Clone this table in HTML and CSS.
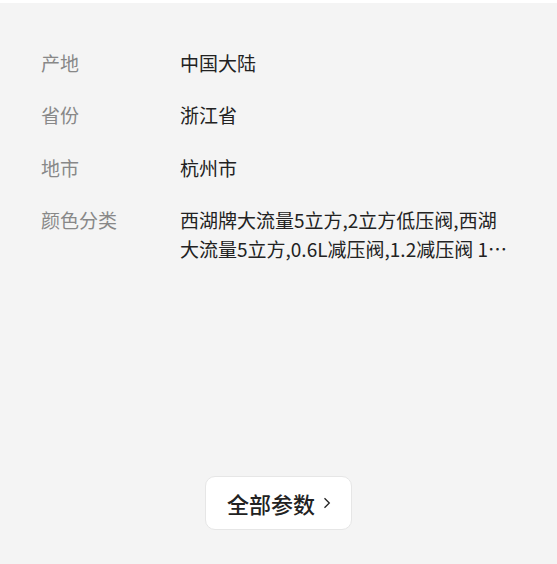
FILE: index.html
```html
<!DOCTYPE html>
<html lang="zh">
<head>
<meta charset="utf-8">
<link rel="stylesheet" href="styles.css">
</head>
<body>
<div class="page">
  <div class="params">
    <div class="row"><div class="label">产地</div><div class="value">中国大陆</div></div>
    <div class="row"><div class="label">省份</div><div class="value">浙江省</div></div>
    <div class="row"><div class="label">地市</div><div class="value">杭州市</div></div>
    <div class="row"><div class="label">颜色分类</div><div class="value clamp">西湖牌大流量5立方,2立方低压阀,西湖大流量5立方,0.6L减压阀,1.2减压阀 1立方低压阀,西湖牌家用减压阀</div></div>
  </div>
  <div class="btn-wrap">
    <button class="all-btn">全部参数<svg class="chev" width="8" height="12" viewBox="0 0 8 12"><path d="M1.5 1.2l4.8 4.8-4.8 4.8" fill="none" stroke="#222" stroke-width="1.3"/></svg></button>
  </div>
</div>
</body>
</html>
```
FILE: styles.css
```css
html, body {
  margin: 0;
  padding: 0;
  background: #f4f4f4;
}
body {
  font-family: "Noto Sans CJK SC", "Noto Sans", sans-serif;
}
.page {
  border-top: 3px solid #ffffff;
  height: 561px;
  box-sizing: border-box;
  background: #f4f4f4;
}
.params {
  padding: 45px 0 0 41px;
  display: flex;
  flex-direction: column;
  gap: 23.3px;
}
.row {
  display: flex;
  font-size: 19px;
  line-height: 29px;
}
.label {
  width: 139px;
  flex: none;
  color: #888;
}
.value {
  width: 335px;
  color: #222;
}
.clamp {
  display: -webkit-box;
  -webkit-line-clamp: 2;
  -webkit-box-orient: vertical;
  overflow: hidden;
}
.btn-wrap {
  display: flex;
  justify-content: center;
  margin-top: 213px;
}
.all-btn {
  width: 147px;
  height: 54px;
  background: #fff;
  border: 1px solid #e6e6e6;
  border-radius: 10px;
  font-family: inherit;
  font-size: 22px;
  font-weight: 500;
  color: #222;
  display: flex;
  align-items: center;
  justify-content: center;
  gap: 8px;
  padding: 0 0 0 1px;
}
.chev {
  display: block;
  margin-top: 1px;
}
```
